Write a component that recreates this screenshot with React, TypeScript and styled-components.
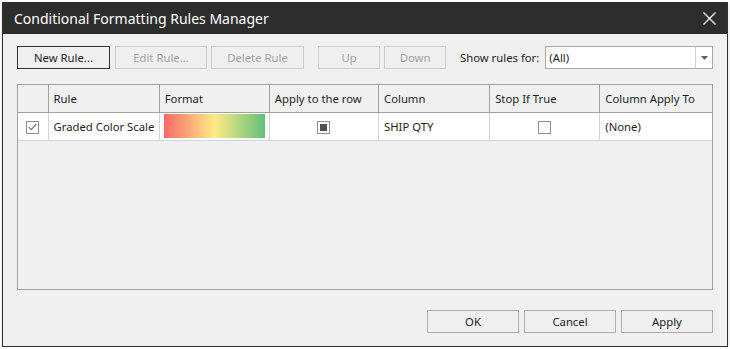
import { styled, createGlobalStyle } from "styled-components";

const GlobalStyle = createGlobalStyle`
  html, body {
    margin: 0;
    padding: 0;
    background: #ffffff;
  }
  body {
    font-family: "Noto Sans", "Open Sans", sans-serif;
    font-size: 11.3px;
    color: #1e1e1e;
  }
`;

const Dialog = styled.div`
  margin: 2px 0 0 2px;
  width: 724px;
  height: 343px;
  border: 1px solid #2f2f2f;
  background: #f0f0f0;
  display: flex;
  flex-direction: column;
  box-shadow: 0 2px 3px rgba(0, 0, 0, 0.15);
`;

const TitleBar = styled.div`
  height: 31px;
  background: #2d2d2d;
  display: flex;
  align-items: center;
  justify-content: space-between;
  padding: 0 10px 0 11px;
  color: #ffffff;
  font-size: 14px;
`;

const CloseButton = styled.div`
  width: 16px;
  height: 16px;
  display: flex;
  align-items: center;
  justify-content: center;
`;

const Body = styled.div`
  flex: 1;
  display: flex;
  flex-direction: column;
  padding: 12px 14px 13px 14px;
`;

const Toolbar = styled.div`
  display: flex;
  align-items: center;
  height: 23px;
`;

const Button = styled.button<{ $w?: number; $focused?: boolean; $gap?: number }>`
  width: ${(p) => p.$w ?? 93}px;
  height: 23px;
  margin-left: ${(p) => p.$gap ?? 0}px;
  box-sizing: border-box;
  border: 1px solid ${(p) => (p.$focused ? "#333333" : "#adadad")};
  background: #efefef;
  font: inherit;
  color: #1e1e1e;
  padding: 0;
  &:disabled {
    border-color: #cdcdcd;
    color: #a3a3a3;
  }
`;

const Label = styled.span`
  margin-left: 14px;
  margin-right: 6px;
  white-space: nowrap;
`;

const Select = styled.div`
  flex: 1;
  height: 23px;
  box-sizing: border-box;
  border: 1px solid #a9a9a9;
  background: #ffffff;
  display: flex;
  align-items: center;
`;

const SelectValue = styled.span`
  flex: 1;
  padding-left: 3px;
`;

const SelectArrow = styled.div`
  width: 16px;
  height: 100%;
  border-left: 1px solid #cfcfcf;
  display: flex;
  align-items: center;
  justify-content: center;
`;

const Grid = styled.div`
  margin-top: 15px;
  height: 206px;
  box-sizing: border-box;
  border: 1px solid #a0a0a0;
  background: #f0f0f0;
`;

const Table = styled.table`
  border-collapse: collapse;
  width: 100%;
  table-layout: fixed;
`;

const Th = styled.th<{ $w: number }>`
  width: ${(p) => p.$w}px;
  height: 27px;
  box-sizing: border-box;
  text-align: left;
  font-weight: normal;
  padding: 0 5px;
  border-right: 1px solid #a0a0a0;
  border-bottom: 1px solid #a0a0a0;
  white-space: nowrap;
  overflow: hidden;
  &:last-child {
    border-right: none;
  }
`;

const Td = styled.td<{ $center?: boolean }>`
  height: 28px;
  box-sizing: border-box;
  background: #ffffff;
  padding: 0 5px;
  text-align: ${(p) => (p.$center ? "center" : "left")};
  border-right: 1px solid #d4d4d4;
  border-bottom: 1px solid #d4d4d4;
  white-space: nowrap;
  overflow: hidden;
  &:last-child {
    border-right: none;
  }
`;

const CheckBox = styled.span<{ $filled?: boolean }>`
  display: inline-flex;
  align-items: center;
  justify-content: center;
  width: 13px;
  height: 13px;
  box-sizing: border-box;
  border: 1px solid #8f8f8f;
  background: #ffffff;
  vertical-align: middle;
  &::after {
    content: "";
    display: ${(p) => (p.$filled ? "block" : "none")};
    width: 7px;
    height: 7px;
    background: #505050;
  }
`;

const ColorScale = styled.div`
  height: 24px;
  margin: 0 -1px;
  background: linear-gradient(to right, #f8696b 0%, #fcaa78 25%, #ffeb84 50%, #b1d580 75%, #63be7b 100%);
`;

const Footer = styled.div`
  margin-top: 20px;
  display: flex;
  justify-content: flex-end;
  gap: 5px;
`;

const columns = [
  { key: "sel", title: "", w: 30 },
  { key: "rule", title: "Rule", w: 111 },
  { key: "format", title: "Format", w: 110 },
  { key: "row", title: "Apply to the row", w: 109 },
  { key: "column", title: "Column", w: 111 },
  { key: "stop", title: "Stop If True", w: 110 },
  { key: "to", title: "Column Apply To", w: 112 },
];

export default function App() {
  return (
    <>
      <GlobalStyle />
      <Dialog>
        <TitleBar>
          <span>Conditional Formatting Rules Manager</span>
          <CloseButton>
            <svg width="13" height="13" viewBox="0 0 13 13">
              <path d="M0.5 0.5 L12.5 12.5 M12.5 0.5 L0.5 12.5" stroke="#ffffff" strokeWidth="1.2" />
            </svg>
          </CloseButton>
        </TitleBar>
        <Body>
          <Toolbar>
            <Button $w={93} $focused>New Rule...</Button>
            <Button $w={92} $gap={5} disabled>Edit Rule...</Button>
            <Button $w={93} $gap={4} disabled>Delete Rule</Button>
            <Button $w={62} $gap={14} disabled>Up</Button>
            <Button $w={62} $gap={4} disabled>Down</Button>
            <Label>Show rules for:</Label>
            <Select>
              <SelectValue>(All)</SelectValue>
              <SelectArrow>
                <svg width="7" height="4" viewBox="0 0 7 4">
                  <path d="M0 0 H7 L3.5 4 Z" fill="#606060" />
                </svg>
              </SelectArrow>
            </Select>
          </Toolbar>
          <Grid>
            <Table>
              <thead>
                <tr>
                  {columns.map((c) => (
                    <Th key={c.key} $w={c.w}>
                      {c.title}
                    </Th>
                  ))}
                </tr>
              </thead>
              <tbody>
                <tr>
                  <Td $center>
                    <CheckBox>
                      <svg width="9" height="8" viewBox="0 0 9 8">
                        <path d="M0.8 4.2 L3.3 6.6 L8.2 0.8" stroke="#707070" strokeWidth="1.1" fill="none" />
                      </svg>
                    </CheckBox>
                  </Td>
                  <Td>Graded Color Scale</Td>
                  <Td>
                    <ColorScale />
                  </Td>
                  <Td $center>
                    <CheckBox $filled />
                  </Td>
                  <Td>SHIP QTY</Td>
                  <Td $center>
                    <CheckBox />
                  </Td>
                  <Td>(None)</Td>
                </tr>
              </tbody>
            </Table>
          </Grid>
          <Footer>
            <Button $w={92}>OK</Button>
            <Button $w={92}>Cancel</Button>
            <Button $w={92}>Apply</Button>
          </Footer>
        </Body>
      </Dialog>
    </>
  );
}
